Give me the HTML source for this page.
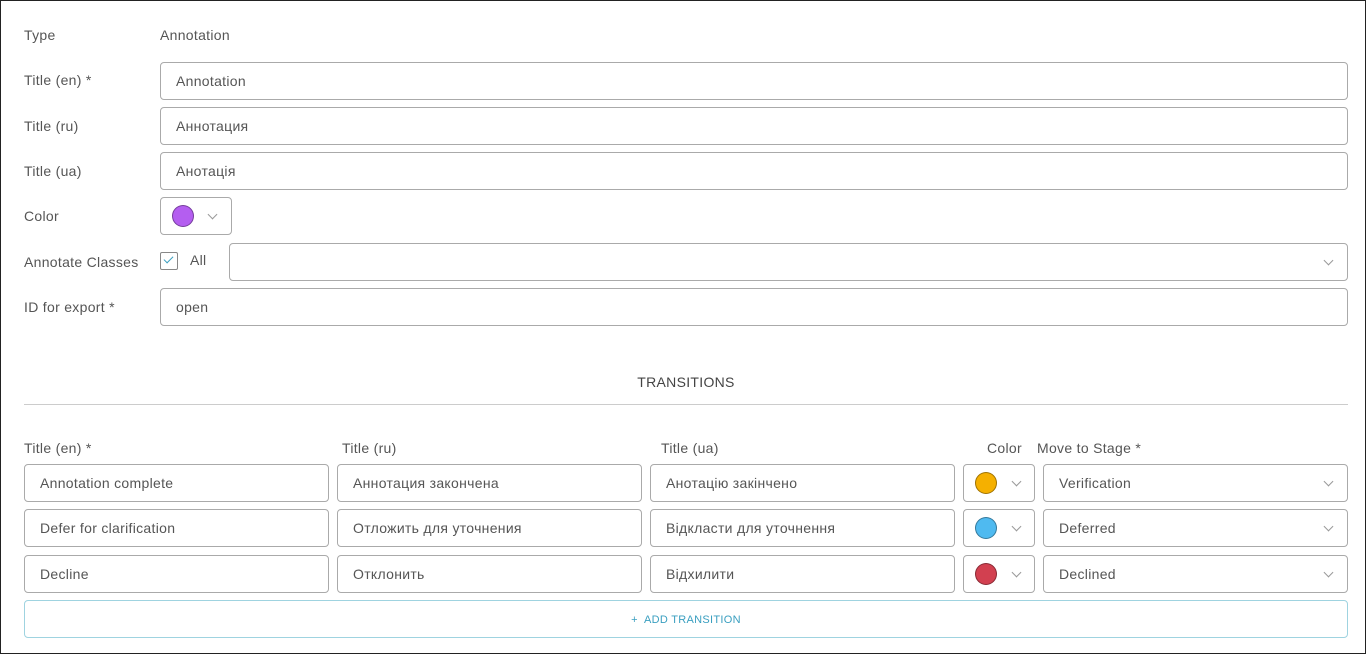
<!DOCTYPE html>
<html><head><meta charset="utf-8"><style>
body{margin:0;width:1366px;height:654px;overflow:hidden;background:#fff;font-family:"Liberation Sans","Noto Sans CJK SC",sans-serif;font-size:14px;color:#555;letter-spacing:0.3px}
.frame{position:absolute;left:0;top:0;width:1364px;height:652px;border:1px solid #222}
.a{position:absolute}
.lbl{position:absolute;line-height:18px}
.in{position:absolute;box-sizing:border-box;border:1px solid #aaa;border-radius:4px;height:38px;line-height:36px;padding-left:15px;color:#555}
.chev{position:absolute;width:6px;height:6px;border-right:1px solid #999;border-bottom:1px solid #999;transform:rotate(45deg)}
.dot{position:absolute;width:22px;height:22px;border-radius:50%;box-sizing:border-box;border:1px solid rgba(0,0,0,.35)}
</style></head><body>
<div class="frame"></div>
<div class="lbl" style="left:24px;top:26px">Type</div>
<div class="lbl" style="left:160px;top:26px">Annotation</div>
<div class="lbl" style="left:24px;top:71px">Title (en) *</div>
<div class="in" style="left:160px;top:62px;width:1188px">Annotation</div>
<div class="lbl" style="left:24px;top:117px">Title (ru)</div>
<div class="in" style="left:160px;top:107px;width:1188px">Аннотация</div>
<div class="lbl" style="left:24px;top:162px">Title (ua)</div>
<div class="in" style="left:160px;top:152px;width:1188px">Анотація</div>
<div class="lbl" style="left:24px;top:207px">Color</div>
<div class="in" style="left:160px;top:197px;width:72px"></div>
<div class="dot" style="left:172px;top:205px;background:#b45ef0"></div>
<div class="chev" style="left:209px;top:211px"></div>
<div class="lbl" style="left:24px;top:253px">Annotate Classes</div>
<div class="a" style="left:160px;top:252px;width:18px;height:18px;box-sizing:border-box;border:1px solid #888;border-radius:2px"></div>
<div class="a" style="left:166px;top:254px;width:4px;height:8px;border-right:1.5px solid #3a9fc0;border-bottom:1.5px solid #3a9fc0;transform:rotate(45deg)"></div>
<div class="lbl" style="left:190px;top:251px">All</div>
<div class="in" style="left:229px;top:243px;width:1119px"></div>
<div class="chev" style="left:1325px;top:257px"></div>
<div class="lbl" style="left:24px;top:298px">ID for export *</div>
<div class="in" style="left:160px;top:288px;width:1188px">open</div>
<div class="lbl" style="left:0;width:1372px;text-align:center;top:373px;color:#444">TRANSITIONS</div>
<div class="a" style="left:24px;top:404px;width:1324px;height:1px;background:#ccc"></div>
<div class="lbl" style="left:24px;top:439px">Title (en) *</div>
<div class="lbl" style="left:342px;top:439px">Title (ru)</div>
<div class="lbl" style="left:661px;top:439px">Title (ua)</div>
<div class="lbl" style="left:987px;top:439px">Color</div>
<div class="lbl" style="left:1037px;top:439px">Move to Stage *</div>

<div class="in" style="left:24px;top:464px;width:305px">Annotation complete</div>
<div class="in" style="left:337px;top:464px;width:305px">Аннотация закончена</div>
<div class="in" style="left:650px;top:464px;width:305px">Анотацію закінчено</div>
<div class="in" style="left:963px;top:464px;width:72px"></div>
<div class="dot" style="left:975px;top:472px;background:#f5b000"></div>
<div class="chev" style="left:1013px;top:478px"></div>
<div class="in" style="left:1043px;top:464px;width:305px">Verification</div>
<div class="chev" style="left:1325px;top:478px"></div>

<div class="in" style="left:24px;top:509px;width:305px">Defer for clarification</div>
<div class="in" style="left:337px;top:509px;width:305px">Отложить для уточнения</div>
<div class="in" style="left:650px;top:509px;width:305px">Відкласти для уточнення</div>
<div class="in" style="left:963px;top:509px;width:72px"></div>
<div class="dot" style="left:975px;top:517px;background:#4fbaf0"></div>
<div class="chev" style="left:1013px;top:523px"></div>
<div class="in" style="left:1043px;top:509px;width:305px">Deferred</div>
<div class="chev" style="left:1325px;top:523px"></div>

<div class="in" style="left:24px;top:555px;width:305px">Decline</div>
<div class="in" style="left:337px;top:555px;width:305px">Отклонить</div>
<div class="in" style="left:650px;top:555px;width:305px">Відхилити</div>
<div class="in" style="left:963px;top:555px;width:72px"></div>
<div class="dot" style="left:975px;top:563px;background:#d24050"></div>
<div class="chev" style="left:1013px;top:569px"></div>
<div class="in" style="left:1043px;top:555px;width:305px">Declined</div>
<div class="chev" style="left:1325px;top:569px"></div>

<div class="a" style="left:24px;top:600px;width:1324px;height:38px;box-sizing:border-box;border:1px solid #9fd3e0;border-radius:4px;text-align:center;line-height:38px;color:#3a9fc0;font-size:11px">+&nbsp; ADD TRANSITION</div>
</body></html>
